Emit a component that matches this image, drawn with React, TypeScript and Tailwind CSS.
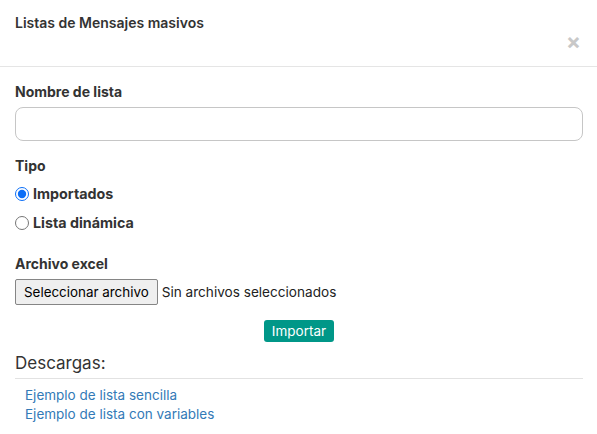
export default function App() {
  return (
    <div className="w-[597px] h-[434px] bg-white text-[#333] text-[14px] font-['Inter',sans-serif] overflow-hidden">
      {/* Header */}
      <div className="h-[67px] border-b border-[#e5e5e5] px-[15px] pt-[14px] flex flex-col">
        <h4 className="font-semibold text-[14px] leading-[17px] text-[#333]">Listas de Mensajes masivos</h4>
        <div className="flex justify-end -mt-[1px]">
          <button className="text-[22px] leading-[22px] font-bold text-[#c8c8c8] mr-[1px]">×</button>
        </div>
      </div>

      {/* Body */}
      <div className="pl-[15px] pr-[14px] pt-[15px]">
        <label className="block font-bold leading-[20px]">Nombre de lista</label>
        <input
          type="text"
          className="mt-[5px] block w-full h-[34px] rounded-[8px] border border-[#c6c6c6] px-3 outline-none"
        />

        <div className="mt-[15px] font-bold leading-[20px]">Tipo</div>
        <label className="mt-[8px] flex items-center gap-[4px] font-bold leading-[20px] text-[14.3px]">
          <input type="radio" name="tipo" defaultChecked className="w-[14px] h-[14px] m-0 accent-[#0b6ef7]" />
          Importados
        </label>
        <label className="mt-[9px] flex items-center gap-[4px] font-bold leading-[20px] text-[14.3px]">
          <input type="radio" name="tipo" className="w-[14px] h-[14px] m-0" />
          Lista dinámica
        </label>

        <div className="mt-[21px] font-bold leading-[20px]">Archivo excel</div>
        <div className="mt-[5px] flex items-center gap-[4px]">
          <button className="h-[26px] px-[8px] bg-[#efefef] border border-[#858585] rounded-[2px] text-[13.4px] text-black">
            Seleccionar archivo
          </button>
          <span className="text-[13.6px] text-[#222]">Sin archivos seleccionados</span>
        </div>

        <div className="mt-[15px] flex justify-center">
          <button className="h-[22px] px-[8px] rounded-[3px] bg-[#009788] text-white text-[13.5px] leading-[22px]">
            Importar
          </button>
        </div>

        <div className="mt-[10px] text-[17px] leading-[22px] text-[#333] pb-[4px] border-b border-[#e2e2e2]">
          Descargas:
        </div>
        <div className="pl-[10px] pt-[7px] flex flex-col text-[13.5px] leading-[19px] text-[#337ab7]">
          <a href="#">Ejemplo de lista sencilla</a>
          <a href="#">Ejemplo de lista con variables</a>
        </div>
      </div>
    </div>
  )
}
